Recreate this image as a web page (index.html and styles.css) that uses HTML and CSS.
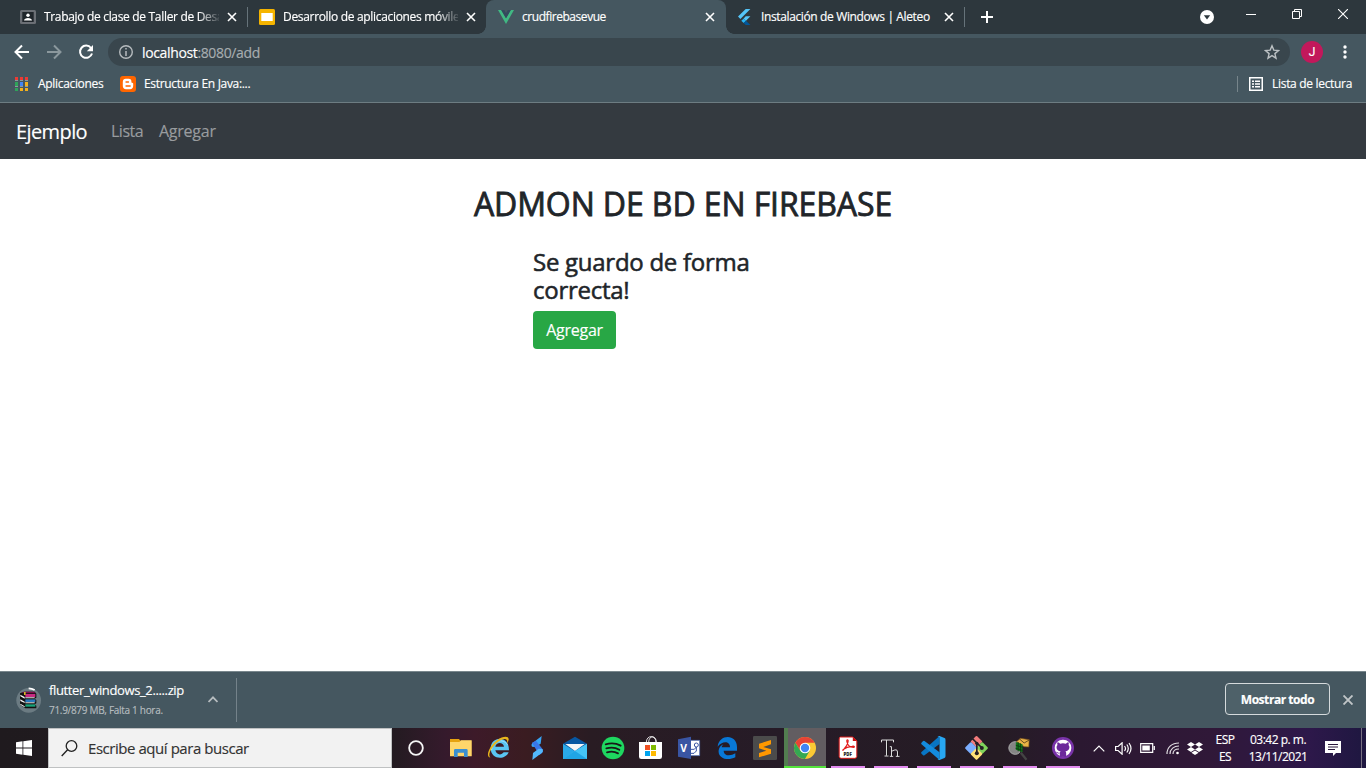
FILE: index.html
```html
<!DOCTYPE html>
<html lang="es">
<head>
<meta charset="utf-8">
<title>crudfirebasevue</title>
<link rel="stylesheet" href="styles.css">
</head>
<body>
<div class="screen">
  <header class="tabstrip">
    <div class="tab sep">
      <svg class="fav" viewBox="0 0 16 16"><rect y="1" width="16" height="14" rx="1.5" fill="#6b6f75"/><rect x="2.300" y="3" width="11.400" height="10" fill="#20262b"/><circle cx="8" cy="6.300" r="1.700" fill="#fff"/><path d="M4 11.500c0-3.500 8-3.500 8 0z" fill="#fff"/></svg>
      <span class="tab-title fade">Trabajo de clase de Taller de Desa</span>
      <svg class="close" viewBox="0 0 10 10"><path d="M1 1l8 8M9 1L1 9"/></svg>
    </div>
    <div class="tab">
      <svg class="fav" viewBox="0 0 16 16"><rect width="16" height="16" rx="1.500" fill="#f5b400"/><rect x="2.300" y="4" width="11.400" height="8" fill="#fff"/></svg>
      <span class="tab-title fade">Desarrollo de aplicaciones móvile</span>
      <svg class="close" viewBox="0 0 10 10"><path d="M1 1l8 8M9 1L1 9"/></svg>
    </div>
    <div class="tab active">
      <svg class="fav" viewBox="0 0 16 16"><path d="M0 1h3.200L8 9.300 12.800 1H16L8 14.900z" fill="#41b883"/><path d="M3.200 1h3L8 4.200 9.800 1h3L8 9.300z" fill="#34495e"/></svg>
      <span class="tab-title vue">crudfirebasevue</span>
      <svg class="close" viewBox="0 0 10 10"><path d="M1 1l8 8M9 1L1 9"/></svg>
    </div>
    <div class="tab sep">
      <svg class="fav" viewBox="0 0 16 16"><path d="M8.700 0h4.700L3.400 10 1 7.600zM8.700 7.300h4.700L9 11.700 6.700 9.400z" fill="#54c5f8"/><path d="M6.700 9.400L9 11.700l-2.300 2.400-2.400-2.400z" fill="#29b6f6"/><path d="M6.700 14.100L9 11.700l4.400 4.300H8.700z" fill="#01579b"/></svg>
      <span class="tab-title flutter">Instalación de Windows | Aleteo</span>
      <svg class="close" viewBox="0 0 10 10"><path d="M1 1l8 8M9 1L1 9"/></svg>
    </div>
    <svg class="plus" viewBox="0 0 12 12"><path d="M6 0v12M0 6h12" stroke="#fff" stroke-width="2"/></svg>
    <div class="window-controls">
      <svg width="14" height="14" viewBox="0 0 14 14" class="drop"><circle cx="7" cy="7" r="7" fill="#fff"/><path d="M3.800 5.200h6.400L7 9.500z" fill="#2d373d"/></svg>
      <svg width="10" height="10" viewBox="0 0 10 10"><path d="M0 5.500h10" stroke="#fff"/></svg>
      <svg width="10" height="10" viewBox="0 0 10 10"><path d="M.5 2.500h7v7h-7zM2.500 2.500v-2h7v7h-2" fill="none" stroke="#fff"/></svg>
      <svg width="10" height="10" viewBox="0 0 10 10"><path d="M0 0l10 10M10 0L0 10" stroke="#fff" stroke-width="1.100"/></svg>
    </div>
  </header>

  <div class="toolbar">
    <svg class="nav-icon" viewBox="0 0 16 16"><path d="M15 8H2M8 1.500L1.500 8 8 14.500" fill="none" stroke="#fff" stroke-width="2"/></svg>
    <svg class="nav-icon" viewBox="0 0 16 16"><path d="M1 8h13M8 1.500L14.500 8 8 14.500" fill="none" stroke="#8b989d" stroke-width="2"/></svg>
    <svg class="nav-icon" viewBox="0 0 16 16"><path d="M13 4A6.100 6.100 0 1 0 14 9.500" fill="none" stroke="#fff" stroke-width="2"/><path d="M15 1v6.200H8.800z" fill="#fff"/></svg>
    <div class="address">
      <svg width="14" height="14" viewBox="0 0 14 14"><circle cx="7" cy="7" r="6.300" fill="none" stroke="#b6bbbe" stroke-width="1.400"/><path d="M7 6v5M7 3v1.600" stroke="#b6bbbe" stroke-width="1.500"/></svg>
      <span class="url"><b>localhost</b>:8080/add</span>
      <svg class="star" viewBox="0 0 16 16"><path d="M8 1.800l1.800 4.300 4.700.4-3.600 3.100 1.100 4.600L8 11.700l-4 2.500 1.100-4.600-3.600-3.100 4.700-.4z" fill="none" stroke="#bbc0c3" stroke-width="1.400"/></svg>
    </div>
    <div class="avatar">J</div>
    <svg class="dots" viewBox="0 0 4 14"><circle cx="2" cy="2" r="1.700"/><circle cx="2" cy="7" r="1.700"/><circle cx="2" cy="12" r="1.700"/></svg>
  </div>

  <div class="bookmarks">
    <svg width="14" height="14" viewBox="0 0 14 14"><path d="M0 0h3v3H0zM5 0h3v3H5zM10 0h3v3h-3z" fill="#ed3b34"/><path d="M0 5h3v4H0zM0 11h3v3H0z" fill="#2fa35a"/><path d="M5 5h3v4H5z" fill="#4285f4"/><path d="M10 5h3v4h-3zM5 11h3v3H5zM10 11h3v3h-3z" fill="#f2b01c"/><path d="M0 3.500h13M0 9.500h13" stroke="#a0aaad" stroke-width=".8" stroke-dasharray="3 2"/></svg>
    <span class="apps">Aplicaciones</span>
    <svg width="16" height="16" viewBox="0 0 16 16"><rect width="16" height="16" rx="3" fill="#f60"/><path d="M5.700 2.800h3c2 0 2.700 1 2.700 2.600 0 1.200.3 1.300 1.300 1.500.4.100.5.300.5.800v2c0 2-1.200 3.500-3.200 3.500H6c-2 0-3.200-1.500-3.200-3.300V6c0-2 1.200-3.200 2.900-3.200z" fill="#fff"/><path d="M6 6h2.500M6 10h4.200" stroke="#f60" stroke-width="1.300" stroke-linecap="round"/></svg>
    <span class="java">Estructura En Java:...</span>
    <div class="reading">
      <svg width="14" height="14" viewBox="0 0 14 14"><rect x=".75" y=".75" width="12.500" height="12.500" fill="none" stroke="#fff" stroke-width="1.500"/><path d="M3 4.300h2M6 4.300h5M3 7h2M6 7h5M3 9.700h2M6 9.700h5" stroke="#fff" stroke-width="1.500"/></svg>
      <span>Lista de lectura</span>
    </div>
  </div>

  <nav class="navbar">
    <a class="brand">Ejemplo</a>
    <a class="link lista">Lista</a>
    <a class="link">Agregar</a>
  </nav>

  <main class="page">
    <h2>ADMON DE BD EN FIREBASE</h2>
    <section class="result">
      <h4>Se guardo de forma correcta!</h4>
      <button class="btn">Agregar</button>
    </section>
  </main>

  <div class="downloads">
    <svg class="zip" viewBox="48 78 78 78"><circle cx="86" cy="118" r="37" fill="#6b7b82"/><path d="M86 82a36 36 0 0 1 18 5" stroke="#fff" stroke-width="5" fill="none"/><path d="M60 97l12-5h32l5 6v12l-5 3 5 4v10l-5 3 5 4v8H76l-16-11z" fill="#111"/><path d="M64 96l10-4h28l5 5H76z" fill="#7d0c4c"/><path d="M76 99h30v9H76z" fill="#c52a81"/><path d="M76 115h30v8H76z" fill="#2879bb"/><path d="M76 130h30v7H76z" fill="#18a37a"/><path d="M76 109h28v3H76zM76 124h28v3H76z" fill="#ddd"/><path d="M61 101l13 7v5l-13-7zM61 115l13 7v4l-13-6zM61 128l13 8v3l-13-8z" fill="#f5f5f5"/><path d="M72 93h5v9h-5z" fill="#d2b928"/></svg>
    <div class="file"><span class="filename">flutter_windows_2.....zip</span><span class="progress">71.9/879 MB, Falta 1 hora.</span></div>
    <svg class="up" viewBox="0 0 10 7"><path d="M.5 6L5 1.300 9.500 6" fill="none" stroke="#b7bdc0" stroke-width="1.800"/></svg>
    <div class="rule"></div>
    <button class="show-all">Mostrar todo</button>
    <svg class="dismiss" viewBox="0 0 10 10"><path d="M.5.5l9 9M9.500.5l-9 9" stroke="#c0c5c7" stroke-width="1.900"/></svg>
  </div>

  <footer class="taskbar">
    <div class="start"><svg width="16" height="16" viewBox="0 0 16 16"><path d="M0 2.200l6.500-.9v6.300H0zM7.300 1.200L16 0v7.600H7.300zM0 8.400h6.500v6.300L0 13.800zM7.300 8.400H16V16l-8.700-1.200z" fill="#fff"/></svg></div>
    <div class="search"><svg width="17" height="17" viewBox="0 0 17 17"><circle cx="10.500" cy="6" r="5.300" fill="none" stroke="#222" stroke-width="1.300"/><path d="M6.600 9.800L.7 15.900" stroke="#222" stroke-width="1.400"/></svg><span>Escribe aquí para buscar</span></div>
    <div class="cell cortana"><svg viewBox="39 45 78 78"><circle cx="78" cy="84" r="20.500" fill="none" stroke="#f5f5f5" stroke-width="5.500"/></svg></div>
    <div class="cell"><svg viewBox="174 45 78 78"><path d="M180 57h27l4 5h33v46h-64z" fill="#e6a210"/><path d="M180 66h28l5-5h32v48h-65z" fill="#ffd66b"/><path d="M192 111V91q0-4 4-4h33q4 0 4 4v20h-11V98h-19v13z" fill="#3b8fd1"/></svg></div>
    <div class="cell"><svg viewBox="288 45 78 78"><path d="M316 80h26c-2-15-24-14-26 0m41 11h-41c3 15 19 15 25 6h15c-10 25-54 22-54-12 0-38 56-41 55 6" fill="#5ac5f2"/><path d="M305 90c2-29 35-36 47-16" fill="none" stroke="#a4e6ff" stroke-width="3"/><path d="M302 113c-18-1-4-36 20-53 17-12 35-13 34-1-1 5-3 9-5 12 4-17-8-18-24-7-23 16-36 43-25 49" fill="#e9b51c"/></svg></div>
    <div class="cell"><svg viewBox="402 45 78 78"><path d="M455 48l-3 23-17 10-9-1q-4-8 3-12z" fill="#37a5f5"/><path d="M426 68l12-6 20 26q3 6-2 11l-8 6z" fill="#3977e8"/><path d="M427 120l2-21 17-13 11 1q4 8-2 12z" fill="#53b8fb"/></svg></div>
    <div class="cell"><svg viewBox="516 45 78 78"><path d="M519 71l36-21 36 21-36 27z" fill="#0757a2"/><path d="M519 71l36 23 36-23v46h-72z" fill="#2aaae9"/><path d="M526 72h58l-29 21z" fill="#f5f6f7"/><path d="M519 117l36-24 36-22v46z" fill="#45c4f5"/><path d="M519 117l36-24 36 24z" fill="#149bdf" opacity=".75"/></svg></div>
    <div class="cell"><svg viewBox="630 45 78 78"><circle cx="669" cy="84" r="34" fill="#1ed760"/><path d="M647 73q25-7 45 4M649 85q22-6 39 4M651 97q19-5 33 3" fill="none" stroke="#181818" stroke-width="5.500" stroke-linecap="round"/></svg></div>
    <div class="cell"><svg viewBox="54 45 78 78"><path d="M79 67c0-23 29-23 29 0M86 67c0-22 23-22 23 0" fill="none" stroke="#fff" stroke-width="2.500"/><path d="M57 66h69v44q0 7-7 7H64q-7 0-7-7z" fill="#fff"/><path d="M75 75h15v15H75z" fill="#f05022"/><path d="M93 75h15v15H93z" fill="#7fba00"/><path d="M75 93h15v15H75z" fill="#00a4ef"/><path d="M93 93h15v15H93z" fill="#ffb900"/></svg></div>
    <div class="cell"><svg viewBox="168 45 78 78"><path d="M211 61h28v46h-28z" fill="#fff" stroke="#4263b0" stroke-width="2"/><circle cx="229" cy="75" r="6" fill="none" stroke="#3955a3" stroke-width="3"/><path d="M213 88h10l6-7v12l-7 7h-9" fill="none" stroke="#3955a3" stroke-width="3"/><path d="M174 58l39-8v67l-39-7z" fill="#3955a3"/><text x="181" y="96" font-family="Open Sans,sans-serif" font-weight="700" font-size="31" fill="#fff">V</text></svg></div>
    <div class="cell"><svg viewBox="282 45 78 78"><path d="M293 80c4-39 60-39 58 4v8h-40c1 17 21 17 35 8v12c-25 13-53 1-50-21 1-8 7-15 14-18-5 5-5 9-5 9h25c0-22-26-18-37-2" fill="#0878d7"/></svg></div>
    <div class="cell"><svg viewBox="396 45 78 78"><rect x="399" y="48" width="72" height="72" rx="4" fill="#4b4b4b"/><path d="M417 71l36-11v13l-23 8 23 7v13l-36 11V99l22-7-22-7z" fill="#ff9800"/></svg></div>
    <div class="cell chrome"><svg viewBox="516 45 78 78"><circle cx="555" cy="84" r="33" fill="#fbc934"/><path d="M526 68A33 33 0 0 1 584 68H555L541 92z" fill="#e84335"/><path d="M526 68A33 33 0 0 0 555 117L569 92H541z" fill="#34a853"/><circle cx="555" cy="84" r="16" fill="#fff"/><circle cx="555" cy="84" r="12.500" fill="#4285f4"/></svg></div>
    <div class="cell open"><svg viewBox="646.500 45 78 78"><path d="M663 51h37l12 12v46q0 6-6 6h-41q-6 0-6-6V57q0-6 4-6z" fill="#fff" stroke="#d91919" stroke-width="3"/><path d="M700 51v12h12z" fill="#c90f0f"/><path d="M672 89c6-6 13-16 14-26 0-5-5-5-4 1 2 11 10 18 20 18 5 0 3-5-4-3-12 1-21 5-27 10-2 2-1 3 1 0" fill="none" stroke="#e31b1b" stroke-width="3.500"/><text x="672" y="107" font-family="Open Sans,sans-serif" font-size="13" font-weight="800" fill="#222">PDF</text></svg></div>
    <div class="cell open"><svg viewBox="85.500 45 78 78"><path d="M96 67v-7h36v7M111 60v47M105 108h12M121 80h5v29M121 109h10M126 94q18-10 18 2v13M139 109h11" fill="none" stroke="#ddd" stroke-width="3"/><path d="M114 63v43M129 98v9M147 94v13" stroke="#111" stroke-width="2"/></svg></div>
    <div class="cell open"><svg viewBox="214.500 45 78 78"><path d="M270 48v24l-45 34q-3 2-5-1l-4-4q-2-3 0-5z" fill="#0875c4"/><path d="M270 120V97l-45-34q-3-2-5 1l-4 4q-2 3 0 5z" fill="#148bdd"/><path d="M270 48l15 6q3 1 3 5v50q0 4-3 5l-15 6q-4 1-6-3 6 2 6-3V54q0-5-6-3 3-4 6-3z" fill="#28a7f2"/></svg></div>
    <div class="cell open"><svg viewBox="343.500 45 78 78"><rect x="368" y="52" width="26" height="26" rx="3" transform="rotate(45 381 65)" fill="#f27b7b"/><rect x="351" y="71" width="26" height="26" rx="3" transform="rotate(45 364 84)" fill="#7baeff"/><rect x="385" y="71" width="26" height="26" rx="3" transform="rotate(45 398 84)" fill="#80d45b"/><rect x="368" y="89" width="26" height="26" rx="3" transform="rotate(45 381 102)" fill="#ffe277"/><path d="M365 52l17 17 16 15M382 70v32" fill="none" stroke="#252025" stroke-width="5"/><circle cx="382" cy="100" r="6" fill="#252025"/><circle cx="382" cy="70" r="5" fill="#252025"/><circle cx="397" cy="84" r="6" fill="#252025"/></svg></div>
    <div class="cell open"><svg viewBox="472.500 45 78 78"><circle cx="497" cy="84" r="19" fill="#858585" stroke="#aaa" stroke-width="3"/><path d="M514 98l17 21" stroke="#444" stroke-width="7"/><path d="M501 65l12-10 26 4-1 22-14-1z" fill="#e9b347" stroke="#79521b" stroke-width="2"/><path d="M510 57l14 12 15-9" fill="none" stroke="#6c4c20" stroke-width="3"/><path d="M499 66l20 7v24l-20-8z" fill="#13781b"/><path d="M506 66v28M513 70v26M499 76l20 6M498 85l21 6" stroke="#0a2d0c" stroke-width="2"/></svg></div>
    <div class="cell open"><svg viewBox="599.500 45 78 78"><circle cx="638.500" cy="84" r="33" fill="#7933a9"/><circle cx="638.500" cy="84" r="25" fill="#fff"/><path d="M629 110v-10c-8 2-9-3-13-5 6-1 7 5 13 3l2-4c-13-2-14-15-9-19q-2-3 0-8 3 0 8 4 8-2 17 0 5-4 8-4 2 5 0 8c5 5 4 17-9 19 3 3 2 10 2 16z" fill="#6c299b"/></svg></div>
    <div class="tray">
      <svg class="chev" viewBox="0 0 12 7"><path d="M.7 6.300L6 1l5.300 5.300"/></svg>
      <svg class="sound" viewBox="0 0 17 13"><path d="M.6 4.500h2.500l4-3.700v11.400l-4-3.700H.6zM9.500 4q2 2.500 0 5M11.800 2.500q3 4 0 8M14 1q4 5.500 0 11"/></svg>
      <svg class="battery" viewBox="0 0 15 10"><path d="M.7.700h12v8.600h-12zM14.300 3v4"/><path class="fill" d="M2.300 2.500h7.500v5H2.300z"/></svg>
      <svg class="wifi" viewBox="0 0 14 13"><path d="M1 12C1 5 6 1 13 1M4 12c0-5 4-8 9-8M7 12c0-3 2-5 6-5" opacity=".85"/><circle class="fill" cx="11.500" cy="11" r="1.300"/></svg>
      <svg class="dropbox" viewBox="0 0 16 13"><path class="fill" d="M4 0l4 2.400-4 2.500-4-2.500zM12 0l4 2.400-4 2.500-4-2.500zM4 5l4 2.400L4 10 0 7.400zM12 5l4 2.400-4 2.600-4-2.600zM8 8.500l3.600 2.200L8 13l-3.600-2.300z"/></svg>
      <div class="lang"><span>ESP</span><span>ES</span></div>
      <div class="clock"><span class="time">03:42 p. m.</span><span class="date">13/11/2021</span></div>
      <svg class="note" viewBox="0 0 16 15"><path d="M0 0h16v12h-5l-3 3v-3H0z" fill="#fff" stroke="none"/><path d="M3 3.500h10M3 6h10M3 8.500h7" stroke="#2a183c"/></svg>
    </div>
  </footer>
</div>
</body>
</html>
```

FILE: styles.css
```css
* { box-sizing: border-box; }
body { margin: 0; font-family: "Open Sans", "Noto Sans", sans-serif; overflow: hidden; -webkit-text-stroke-width: 0.15px; }
svg { display: block; flex: none; }
svg text { -webkit-text-stroke-width: 0; }
button { font-family: inherit; }
.screen { width: 1366px; height: 768px; display: flex; flex-direction: column; background: #fff; }

.tabstrip { height: 34px; flex: none; display: flex; align-items: center; padding-left: 8px; background: #2d373d; color: #fff; font-size: 12px; }
.tab { position: relative; width: 239px; height: 34px; flex: none; display: flex; align-items: center; padding: 0 10px 0 12px; }
.tab.sep::after { content: ""; position: absolute; right: -1px; top: 7px; width: 1px; height: 20px; background: #66737a; }
.fav { width: 16px; height: 16px; margin-right: 8px; }
.tab-title { flex: 1; overflow: hidden; white-space: nowrap; line-height: 18px; letter-spacing: -0.32px; }
.tab-title.vue { letter-spacing: -0.45px; }
.tab-title.flutter { letter-spacing: -0.37px; }
.tab-title.fade { -webkit-mask-image: linear-gradient(90deg, #000 154px, transparent 178px); mask-image: linear-gradient(90deg, #000 154px, transparent 178px); }
.close { width: 10px; height: 10px; margin-left: 8px; fill: none; stroke: #fff; stroke-width: 1.6; }
.active { background: #455760; border-radius: 8px 8px 0 0; width: 240px; margin-right: -1px; z-index: 1; padding-right: 11px; }
.active::before, .active::after { content: ""; position: absolute; bottom: 0; width: 8px; height: 8px; }
.active::before { left: -8px; background: radial-gradient(circle at 0 0, transparent 7.5px, #455760 8px); }
.active::after { right: -8px; background: radial-gradient(circle at 100% 0, transparent 7.5px, #455760 8px); }
.plus { width: 12px; height: 12px; margin-left: 17px; }
.window-controls { margin-left: auto; align-self: flex-start; display: flex; align-items: center; gap: 36px; padding-right: 18px; height: 28px; }
.window-controls .drop { margin: 6px -4px 0 0; }

.toolbar { height: 36px; flex: none; background: #455760; display: flex; align-items: center; padding-left: 14px; }
.nav-icon { width: 16px; height: 16px; margin-right: 16px; }
.address { width: 1182px; height: 28px; margin-left: -2px; border-radius: 14px; background: #39464d; display: flex; align-items: center; padding: 0 10px 0 11px; }
.url { margin-left: 9px; font-size: 14px; color: #a7adb0; letter-spacing: -0.36px; }
.url b { font-weight: 400; color: #fff; }
.star { width: 16px; height: 16px; margin-left: auto; }
.avatar { width: 22px; height: 22px; margin-left: 11px; border-radius: 50%; background: #c2185b; color: #fff; font: 12px/22px Roboto, sans-serif; text-align: center; }
.dots { width: 4px; height: 14px; margin-left: 20px; fill: #fff; }

.bookmarks { height: 33px; flex: none; background: #455760; border-bottom: 1px solid #6d7c82; display: flex; align-items: center; padding: 0 14px 4px 15px; color: #fff; font-size: 12px; white-space: nowrap; }
.bookmarks span { padding-bottom: 2px; }
.apps { margin: 0 16px 0 9px; width: 66px; letter-spacing: -0.32px; }
.java { margin-left: 8px; letter-spacing: -0.32px; }
.reading { margin-left: auto; display: flex; align-items: center; gap: 9px; padding-left: 11px; height: 16px; border-left: 1px solid #77858b; letter-spacing: -0.32px; }

.navbar { height: 56px; flex: none; background: #343a40; display: flex; align-items: center; padding: 0 16px; white-space: nowrap; }
.brand { color: #fff; font-size: 20px; width: 71px; margin-right: 24px; letter-spacing: -0.6px; }
.link { color: #999c9f; font-size: 16px; letter-spacing: -0.25px; }
.lista { margin-right: 16px; width: 32px; letter-spacing: -0.5px; }

.page { flex: 1; min-height: 0; background: #fff; color: #212529; padding-top: 26px; }
.page h2 { margin: 0; font-size: 32px; line-height: 38px; font-weight: 500; text-align: center; letter-spacing: -0.1px; -webkit-text-stroke-width: 0.8px; }
.result { width: 300px; margin: 26px 0 0 533px; }
.result h4 { width: 225px; margin: 0 0 7px; position: relative; top: -1px; font-size: 24px; line-height: 28px; font-weight: 500; letter-spacing: -0.27px; -webkit-text-stroke-width: 0.55px; }
.btn { display: block; width: 83px; height: 38px; margin-top: -1px; padding: 0; border: 0; border-radius: 4px; background: #28a745; color: #fff; font-size: 16px; letter-spacing: -0.25px; white-space: nowrap; }

.downloads { height: 57px; flex: none; background: #455760; border-top: 1px solid #79878d; display: flex; align-items: center; padding: 0 13px 1px 16px; }
.zip { width: 26px; height: 26px; }
.file { margin-left: 7px; width: 150px; display: flex; flex-direction: column; white-space: nowrap; }
.filename { color: #fff; font-size: 13px; line-height: 20px; letter-spacing: -0.37px; }
.progress { color: #b5bcbf; font-size: 10px; line-height: 20px; letter-spacing: -0.3px; }
.up { width: 10px; height: 7px; margin-left: 9px; }
.rule { width: 1px; height: 44px; margin-left: 18px; background: #74828a; }
.show-all { width: 105px; height: 32px; margin: -1px 13px 0 auto; padding: 0; border: 1px solid #d5dadc; border-radius: 4px; background: #4e6169; color: #fff; font-size: 12px; font-weight: 700; letter-spacing: -0.45px; }
.dismiss { width: 10px; height: 10px; }

.taskbar { height: 40px; flex: none; display: flex; background: linear-gradient(90deg, #1f1a1e 0, #231b21 392px, #351a2c 445px, #3d1a29 475px, #3a1c21 525px, #291c23 590px, #261b27 780px, #251c24 1000px, #2b1831 1080px, #301838 1210px, #2d184a 1310px, #1e1740 1366px); }
.start { width: 48px; display: flex; align-items: center; justify-content: center; }
.search { width: 344px; height: 40px; background: #f2f2f2; border: 1px solid #bfc1c2; display: flex; align-items: center; padding-left: 12px; color: #333; font-size: 15px; letter-spacing: -0.45px; white-space: nowrap; }
.search span { margin-left: 10px; }
.cell { width: 38px; height: 40px; flex: none; display: flex; align-items: center; justify-content: center; }
.cell svg { width: 26px; height: 26px; }
.cortana { width: 50px; padding-right: 2px; }
.chrome { width: 42px; background: linear-gradient(90deg, #527d50 4px, #625d61 4px); border-bottom: 2px solid #54e43c; padding-top: 2px; }
.open { width: 43px; padding-top: 2px; border-bottom: 2px solid transparent; background: linear-gradient(#e28bef, #e28bef) center bottom / 34px 2px no-repeat border-box; }

.tray { flex: 1; display: flex; align-items: center; margin-right: 4px; padding-left: 9px; border-right: 1px solid #777081; color: #fff; }
.tray svg { fill: none; stroke: #fff; stroke-width: 1.2; }
.tray .fill { fill: #fff; stroke: none; }
.chev { width: 12px; height: 7px; }
.sound { width: 17px; height: 13px; margin-left: 10px; }
.battery { width: 15px; height: 10px; margin-left: 8px; }
.wifi { width: 14px; height: 13px; margin-left: 11px; }
.dropbox { width: 16px; height: 13px; margin-left: 7px; }
.lang, .clock { display: flex; flex-direction: column; align-items: center; font-size: 12px; line-height: 17px; white-space: nowrap; letter-spacing: -0.5px; }
.lang { width: 20px; margin-left: 12px; }
.clock { width: 58px; margin-left: 14px; }
.note { width: 16px; height: 15px; margin-left: 18px; }
```
